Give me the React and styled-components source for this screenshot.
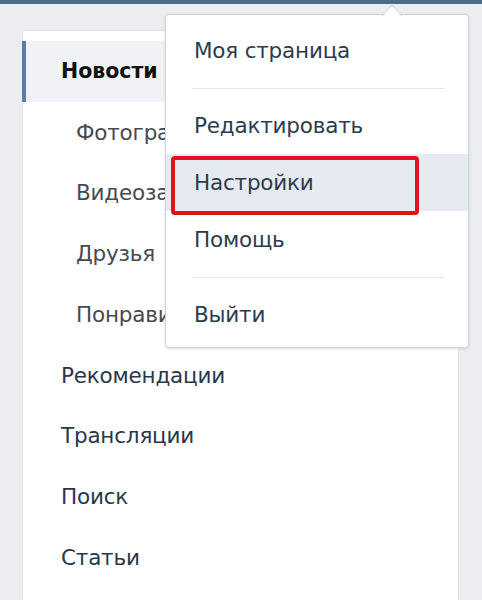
import React from "react";
import styled, { createGlobalStyle } from "styled-components";

const GlobalStyle = createGlobalStyle`
  body {
    margin: 0;
    background: #ebedf0;
    font-family: "DejaVu Sans", "Liberation Sans", sans-serif;
  }
`;

const Page = styled.div`
  position: relative;
  width: 482px;
  height: 600px;
  overflow: hidden;
  background: #ebedf0;
`;

const TopBar = styled.div`
  height: 4px;
  background: #4d6c8e;
`;

const Content = styled.div`
  padding: 26px 0 0 22px;
`;

const Card = styled.div`
  width: 437px;
  height: 600px;
  background: #fff;
  border: 1px solid #dfe3e8;
  border-radius: 3px 3px 0 0;
  box-sizing: border-box;
  padding-top: 10px;
`;

const Menu = styled.div`
  display: flex;
  flex-direction: column;
`;

const MenuItem = styled.div`
  height: 60.75px;
  display: flex;
  align-items: center;
  box-sizing: border-box;
  padding-left: ${(p) => (p.$sub ? 50 : 35)}px;
  font-size: ${(p) => (p.$active ? 20.5 : 21.5)}px;
  letter-spacing: -0.2px;
  color: ${(p) => (p.$sub ? "#444a52" : "#28384b")};
  font-weight: ${(p) => (p.$active ? "bold" : "normal")};
  background: ${(p) => (p.$active ? "#f0f2f5" : "transparent")};
  border-left: 4px solid ${(p) => (p.$active ? "#587ea6" : "transparent")};
  margin-left: -1px;
  ${(p) => p.$active && "color: #111; letter-spacing: 0;"}
`;

const Dropdown = styled.div`
  position: absolute;
  left: 165px;
  top: 14px;
  width: 304px;
  height: 334px;
  box-sizing: border-box;
  background: #fff;
  border: 1px solid #cdd5dd;
  border-radius: 4px;
  box-shadow: 0 1px 3px rgba(0, 0, 0, 0.12);
  padding-top: 7px;
`;

const Arrow = styled.svg`
  position: absolute;
  left: 216px;
  top: -10px;
`;

const DropItem = styled.div`
  position: relative;
  height: 57px;
  display: flex;
  align-items: center;
  padding-left: 28px;
  font-size: 21.5px;
  letter-spacing: -0.2px;
  color: #2b3c50;
  background: ${(p) => (p.$hover ? "#e5ebf1" : "transparent")};
`;

const Separator = styled.div`
  height: 18px;
  display: flex;
  align-items: center;
  padding: 0 24px 0 26px;

  &::after {
    content: "";
    flex: 1;
    height: 1px;
    background: #e2e5ea;
  }
`;

const Highlight = styled.div`
  position: absolute;
  left: 5px;
  top: 2px;
  width: 248px;
  height: 59px;
  box-sizing: border-box;
  border: 4px solid #e0131c;
  border-radius: 4px;
`;

const leftItems = [
  { label: "Новости", active: true },
  { label: "Фотографии", sub: true },
  { label: "Видеозаписи", sub: true },
  { label: "Друзья", sub: true },
  { label: "Понравилось", sub: true },
  { label: "Рекомендации" },
  { label: "Трансляции" },
  { label: "Поиск" },
  { label: "Статьи" },
];

export default function App() {
  return (
    <Page>
      <GlobalStyle />
      <TopBar />
      <Content>
        <Card>
          <Menu>
            {leftItems.map((it) => (
              <MenuItem key={it.label} $active={it.active} $sub={it.sub}>
                {it.label}
              </MenuItem>
            ))}
          </Menu>
        </Card>
      </Content>
      <Dropdown>
        <Arrow width="20" height="11" viewBox="0 0 20 11">
          <path d="M0 11 L9 1 L11 1 L20 11" fill="#fff" stroke="#cdd5dd" strokeWidth="1" />
        </Arrow>
        <DropItem>Моя страница</DropItem>
        <Separator />
        <DropItem>Редактировать</DropItem>
        <DropItem $hover>
          Настройки
          <Highlight />
        </DropItem>
        <DropItem>Помощь</DropItem>
        <Separator />
        <DropItem>Выйти</DropItem>
      </Dropdown>
    </Page>
  );
}
